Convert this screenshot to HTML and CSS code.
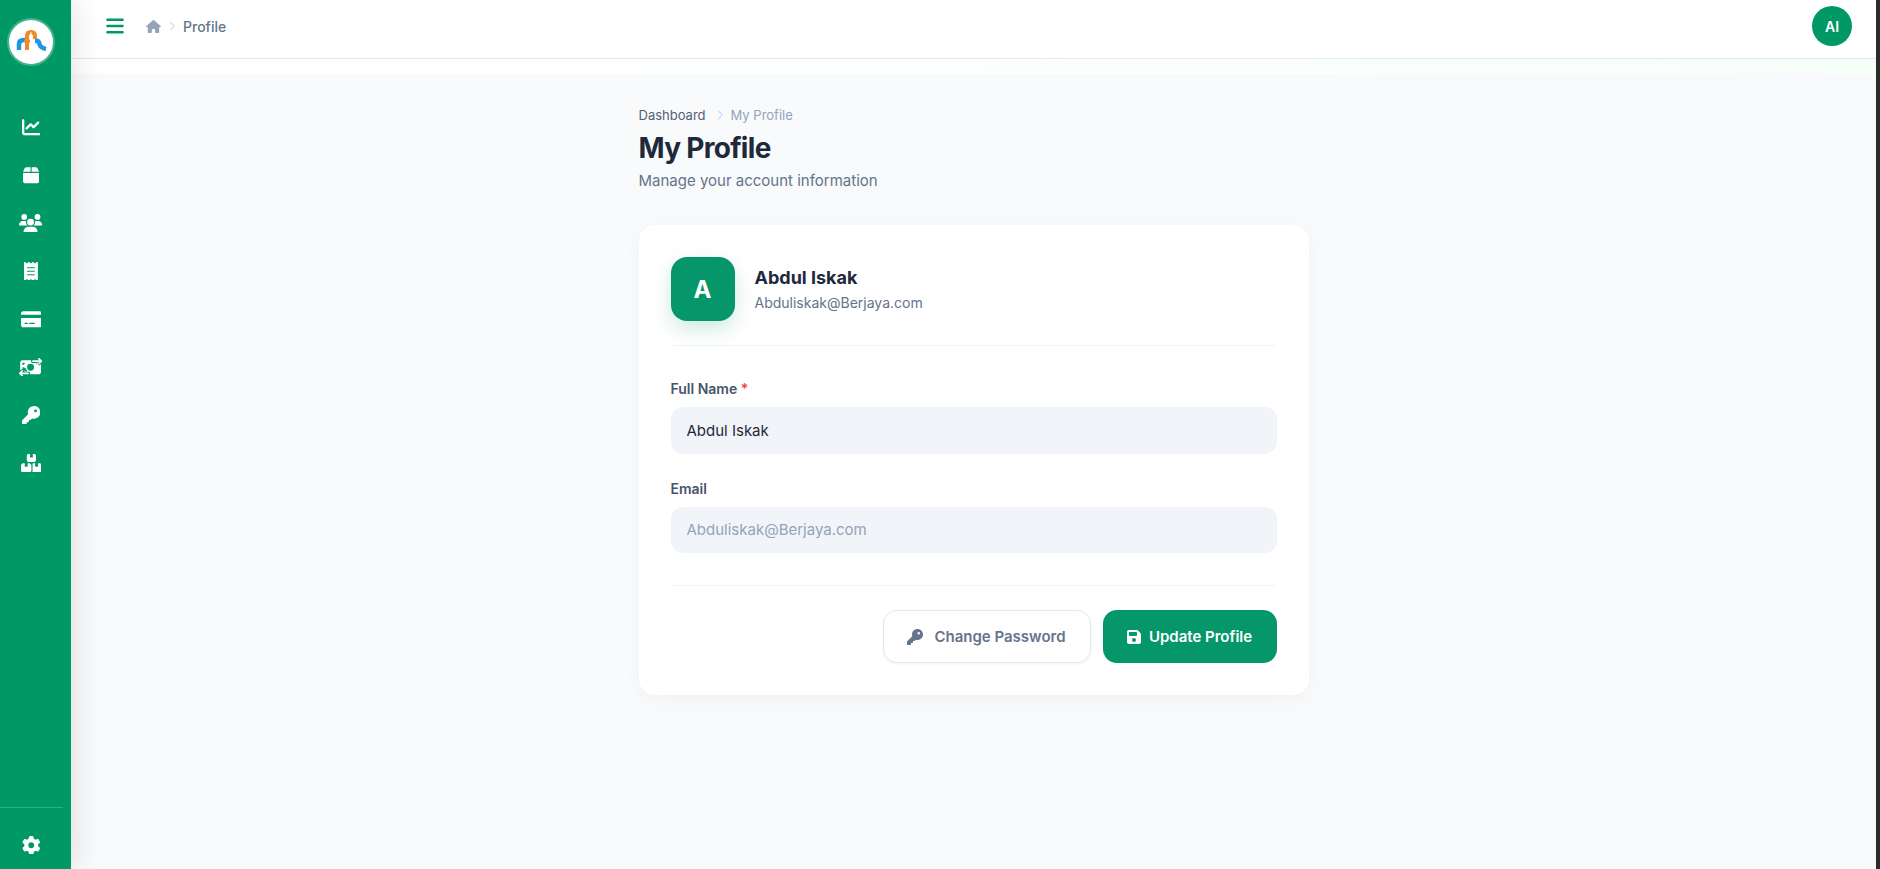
FILE: index.html
```html
<!DOCTYPE html>
<html lang="en">
<head>
<meta charset="utf-8">
<title>My Profile</title>
<link rel="stylesheet" href="styles.css">
</head>
<body>
<div class="app">
  <aside class="sidebar">
    <div class="logo-wrap">
      <div class="logo">
        <svg viewBox="0 0 44 44" width="44" height="44" fill="none">
          <path d="M10 30v-6q0-4 5-4h1" stroke="#1e96e8" stroke-width="4.500"/>
          <path d="M26 20.500q4 0 4.500 3.500t6.500 5" stroke="#1e96e8" stroke-width="4.500"/>
          <path d="M18 30V16q0-4 4-4t4 4v3" stroke="#f08a24" stroke-width="4"/>
          <path d="M15 21h6" stroke="#f08a24" stroke-width="3"/>
          <path d="M22 12v4" stroke="#fff" stroke-width="1"/>
        </svg>
      </div>
    </div>
    <nav class="side-nav">
      <a class="side-item"><svg class="side-icon" viewBox="0 0 512 512"><path d="M64 64c0-17.700-14.300-32-32-32S0 46.300 0 64V400c0 44.200 35.800 80 80 80H480c17.700 0 32-14.300 32-32s-14.300-32-32-32H80c-8.800 0-16-7.200-16-16V64zm406.600 86.600c12.500-12.500 12.500-32.800 0-45.300s-32.800-12.500-45.300 0L320 210.700l-57.400-57.400c-12.500-12.500-32.800-12.500-45.300 0l-112 112c-12.500 12.500-12.500 32.800 0 45.300s32.800 12.500 45.300 0L240 221.300l57.400 57.400c12.500 12.500 32.800 12.500 45.300 0l128-128z"/></svg></a>
      <a class="side-item"><svg class="side-icon" viewBox="0 0 448 512"><path d="M50.700 58.500L0 160H208V32H93.700C75.500 32 58.900 42.300 50.700 58.500zM240 160H448L397.300 58.500C389.100 42.300 372.500 32 354.300 32H240V160zm208 32H0V416c0 35.300 28.700 64 64 64H384c35.300 0 64-28.700 64-64V192z"/></svg></a>
      <a class="side-item"><svg class="side-icon" viewBox="0 0 640 512"><path d="M144 0a80 80 0 1 1 0 160A80 80 0 1 1 144 0zM512 0a80 80 0 1 1 0 160A80 80 0 1 1 512 0zM0 298.700C0 239.800 47.800 192 106.700 192h42.700c15.900 0 31 3.500 44.600 9.700c-1.300 7.200-1.900 14.700-1.900 22.300c0 38.200 16.800 72.500 43.300 96c-.2 0-.4 0-.7 0H21.300C9.600 320 0 310.400 0 298.700zM405.300 320c-.2 0-.4 0-.7 0c26.600-23.500 43.300-57.800 43.300-96c0-7.600-.7-15-1.900-22.300c13.600-6.300 28.700-9.700 44.600-9.700h42.700C592.200 192 640 239.800 640 298.700c0 11.800-9.600 21.300-21.300 21.300H405.300zM224 224a96 96 0 1 1 192 0 96 96 0 1 1 -192 0zM128 485.300C128 411.700 187.700 352 261.300 352H378.700C452.300 352 512 411.700 512 485.300c0 14.700-11.900 26.700-26.700 26.700H154.700c-14.700 0-26.700-11.900-26.700-26.700z"/></svg></a>
      <a class="side-item"><svg class="side-icon" viewBox="0 0 384 512"><path d="M14 2.200C22.500-1.700 32.500-.3 39.600 5.800L80 40.400 120.400 5.800c9-7.700 22.300-7.700 31.200 0L192 40.400 232.400 5.800c9-7.700 22.200-7.700 31.200 0L304 40.400 344.400 5.800c7.100-6.100 17.100-7.500 25.600-3.600s14 12.400 14 21.800V488c0 9.400-5.500 17.900-14 21.800s-18.500 2.500-25.600-3.600L304 471.600l-40.400 34.600c-9 7.700-22.300 7.700-31.200 0L192 471.600l-40.400 34.600c-9 7.700-22.200 7.700-31.200 0L80 471.600 39.600 506.200c-7.100 6.100-17.100 7.500-25.600 3.600S0 497.400 0 488V24C0 14.600 5.500 6.100 14 2.200zM96 144c-8.800 0-16 7.200-16 16s7.200 16 16 16H288c8.800 0 16-7.200 16-16s-7.200-16-16-16H96zM80 352c0 8.800 7.200 16 16 16H288c8.800 0 16-7.200 16-16s-7.200-16-16-16H96c-8.800 0-16 7.200-16 16zM96 240c-8.800 0-16 7.200-16 16s7.200 16 16 16H288c8.800 0 16-7.200 16-16s-7.200-16-16-16H96z"/></svg></a>
      <a class="side-item"><svg class="side-icon" viewBox="0 0 576 512"><path d="M64 32C28.700 32 0 60.700 0 96v32H576V96c0-35.300-28.700-64-64-64H64zM576 224H0V416c0 35.300 28.700 64 64 64H512c35.300 0 64-28.700 64-64V224zM112 352h64c8.800 0 16 7.200 16 16s-7.200 16-16 16H112c-8.800 0-16-7.200-16-16s7.200-16 16-16zm112 16c0-8.800 7.200-16 16-16H368c8.800 0 16 7.200 16 16s-7.200 16-16 16H240c-8.800 0-16-7.200-16-16z"/></svg></a>
      <a class="side-item"><svg class="side-icon" viewBox="0 0 640 512"><path fill-rule="evenodd" d="M535 41c-9.400-9.400-9.400-24.600 0-33.900s24.600-9.400 33.900 0l64 64c4.500 4.500 7 10.600 7 17s-2.500 12.500-7 17l-64 64c-9.400 9.400-24.600 9.400-33.900 0s-9.400-24.600 0-33.900l23-23L384 112c-13.300 0-24-10.700-24-24s10.700-24 24-24l174.100 0L535 41zM105 377l-23 23L256 400c13.300 0 24 10.700 24 24s-10.700 24-24 24L81.900 448l23 23c9.400 9.400 9.400 24.600 0 33.900s-24.600 9.400-33.900 0L7 441c-4.500-4.500-7-10.600-7-17s2.500-12.500 7-17l64-64c9.400-9.400 24.600-9.400 33.900 0s9.400 24.600 0 33.900zM96 64H337.900c-3.700 7.200-5.900 15.300-5.900 24c0 28.700 23.300 52 52 52l117.400 0c-4 17 .6 35.500 13.800 48.800c20.300 20.300 53.200 20.300 73.500 0L608 169.500V384c0 35.300-28.700 64-64 64H302.100c3.700-7.200 5.900-15.300 5.900-24c0-28.700-23.300-52-52-52l-117.400 0c4-17-.6-35.500-13.800-48.800c-20.300-20.300-53.200-20.300-73.500 0L32 342.500V128c0-35.300 28.700-64 64-64zm64 64H96v64c35.300 0 64-28.700 64-64zM96 320c35.300 0 64 28.700 64 64h64c0-70.700-57.300-128-128-128v64zM544 192V128H480c0 35.300 28.700 64 64 64zM320 352a96 96 0 1 0 0-192 96 96 0 1 0 0 192z"/></svg></a>
      <a class="side-item"><svg class="side-icon" viewBox="0 0 512 512"><path d="M336 352c97.200 0 176-78.800 176-176S433.200 0 336 0S160 78.800 160 176c0 18.700 2.900 36.800 8.300 53.700L7 391c-4.500 4.500-7 10.600-7 17v80c0 13.300 10.700 24 24 24h80c13.300 0 24-10.700 24-24V448h40c13.300 0 24-10.700 24-24V384h40c6.400 0 12.500-2.500 17-7l33.300-33.300c16.900 5.400 35 8.300 53.700 8.300zM376 96a40 40 0 1 1 0 80 40 40 0 1 1 0-80z"/></svg></a>
      <a class="side-item"><svg class="side-icon" viewBox="0 0 576 512"><path d="M248 0H208c-26.500 0-48 21.500-48 48V160c0 35.300 28.700 64 64 64H352c35.300 0 64-28.700 64-64V48c0-26.500-21.500-48-48-48H328V80c0 8.800-7.200 16-16 16H264c-8.800 0-16-7.200-16-16V0zM64 256c-35.300 0-64 28.700-64 64V448c0 35.300 28.700 64 64 64H224c35.300 0 64-28.700 64-64V320c0-35.300-28.700-64-64-64H184v80c0 8.800-7.200 16-16 16H120c-8.800 0-16-7.200-16-16V256H64zM352 512H512c35.300 0 64-28.700 64-64V320c0-35.300-28.700-64-64-64H472v80c0 8.800-7.200 16-16 16H408c-8.800 0-16-7.200-16-16V256H352c-15 0-28.800 5.100-39.700 13.800c4.900 10.400 7.700 22 7.700 34.200V464c0 12.200-2.800 23.800-7.700 34.200C323.200 506.900 337 512 352 512z"/></svg></a>
    </nav>
    <div class="side-foot">
      <a class="side-item"><svg class="side-icon" viewBox="0 0 512 512"><path d="M495.900 166.600c3.200 8.700 .5 18.400-6.400 24.600l-43.300 39.400c1.100 8.300 1.700 16.800 1.700 25.400s-.6 17.100-1.700 25.400l43.300 39.400c6.900 6.200 9.600 15.900 6.400 24.600c-4.400 11.900-9.700 23.300-15.800 34.300l-4.700 8.100c-6.600 11-14 21.400-22.100 31.200c-5.900 7.200-15.700 9.600-24.500 6.800l-55.700-17.700c-13.400 10.300-28.200 18.900-44 25.400l-12.500 57.100c-2 9.100-9 16.300-18.200 17.800c-13.800 2.300-28 3.500-42.500 3.500s-28.700-1.200-42.500-3.500c-9.200-1.500-16.200-8.700-18.200-17.800l-12.500-57.100c-15.800-6.500-30.600-15.100-44-25.400L83.100 425.900c-8.800 2.800-18.600 .3-24.500-6.800c-8.100-9.800-15.500-20.200-22.100-31.200l-4.700-8.100c-6.100-11-11.400-22.400-15.800-34.300c-3.200-8.700-.5-18.400 6.400-24.600l43.300-39.400C64.600 273.100 64 264.600 64 256s.6-17.100 1.700-25.400L22.400 191.200c-6.900-6.200-9.600-15.900-6.400-24.600c4.400-11.900 9.700-23.300 15.800-34.300l4.700-8.100c6.600-11 14-21.400 22.100-31.200c5.900-7.200 15.700-9.600 24.500-6.800l55.700 17.700c13.400-10.300 28.200-18.900 44-25.400l12.500-57.100c2-9.100 9-16.300 18.200-17.800C227.300 1.200 241.500 0 256 0s28.700 1.200 42.500 3.500c9.200 1.500 16.200 8.700 18.200 17.800l12.500 57.100c15.800 6.500 30.600 15.100 44 25.400l55.700-17.700c8.800-2.800 18.600-.3 24.500 6.800c8.100 9.800 15.500 20.200 22.100 31.200l4.700 8.100c6.100 11 11.400 22.400 15.800 34.300zM256 336a80 80 0 1 0 0-160 80 80 0 1 0 0 160z"/></svg></a>
    </div>
  </aside>
  <div class="main">
    <header class="topbar">
      <svg class="menu-icon" viewBox="0 0 448 512"><path d="M0 96C0 78.300 14.300 64 32 64H416c17.700 0 32 14.300 32 32s-14.300 32-32 32H32C14.300 128 0 113.700 0 96zM0 256c0-17.700 14.300-32 32-32H416c17.700 0 32 14.300 32 32s-14.300 32-32 32H32c-17.700 0-32-14.300-32-32zM448 416c0 17.700-14.300 32-32 32H32c-17.700 0-32-14.300-32-32s14.300-32 32-32H416c17.700 0 32 14.300 32 32z"/></svg>
      <div class="top-crumbs">
        <svg class="home-icon" viewBox="0 0 576 512"><path d="M575.800 255.500c0 18-15 32.100-32 32.100h-32l.7 160.200c0 2.700-.2 5.400-.5 8.100V472c0 22.100-17.900 40-40 40H456c-1.100 0-2.200 0-3.300-.1c-1.400 .1-2.800 .1-4.200 .1H416 392c-22.100 0-40-17.900-40-40V448 384c0-17.700-14.300-32-32-32H256c-17.700 0-32 14.300-32 32v64 24c0 22.100-17.900 40-40 40H160 128.100c-1.500 0-3-.1-4.500-.2c-1.200 .1-2.400 .2-3.600 .2H104c-22.100 0-40-17.900-40-40V360c0-.9 0-1.900 .1-2.800V287.600H32c-18 0-32-14-32-32.100c0-9 3-17 10-24L266.400 8c7-7 15-8 22-8s15 2 21 7L564.800 231.500c8 7 12 15 11 24z"/></svg>
        <svg class="chev" viewBox="0 0 8 12"><path d="M1.500 1l4.500 5-4.500 5"/></svg>
        <span class="top-crumb-text">Profile</span>
      </div>
      <div class="top-avatar">AI</div>
    </header>
    <div class="top-strip"></div>
    <main class="content">
      <div class="page">
        <div class="crumbs">
          <span class="crumb-link">Dashboard</span>
          <svg class="chev" viewBox="0 0 8 12"><path d="M1.500 1l4.500 5-4.500 5"/></svg>
          <span class="crumb-current">My Profile</span>
        </div>
        <h1 class="title">My Profile</h1>
        <p class="subtitle">Manage your account information</p>
        <section class="card">
          <div class="profile-row">
            <div class="big-avatar">A</div>
            <div class="profile-info">
              <div class="profile-name">Abdul Iskak</div>
              <div class="profile-email">Abduliskak@Berjaya.com</div>
            </div>
          </div>
          <div class="field">
            <label class="field-label">Full Name <span class="req">*</span></label>
            <input class="field-input" type="text" value="Abdul Iskak">
          </div>
          <div class="field field-last">
            <label class="field-label">Email</label>
            <input class="field-input is-disabled" type="text" value="Abduliskak@Berjaya.com" disabled>
          </div>
          <div class="actions">
            <button class="btn btn-ghost"><svg class="btn-key" viewBox="0 0 512 512"><path d="M336 352c97.200 0 176-78.800 176-176S433.200 0 336 0S160 78.800 160 176c0 18.700 2.900 36.800 8.300 53.700L7 391c-4.500 4.500-7 10.600-7 17v80c0 13.300 10.700 24 24 24h80c13.300 0 24-10.700 24-24V448h40c13.300 0 24-10.700 24-24V384h40c6.400 0 12.500-2.500 17-7l33.300-33.300c16.900 5.400 35 8.300 53.700 8.300zM376 96a40 40 0 1 1 0 80 40 40 0 1 1 0-80z"/></svg>Change Password</button>
            <button class="btn btn-primary"><svg class="btn-save" viewBox="0 0 448 512"><path d="M64 32C28.700 32 0 60.700 0 96V416c0 35.300 28.700 64 64 64H384c35.300 0 64-28.700 64-64V173.300c0-17-6.700-33.300-18.700-45.300L352 50.700C340 38.700 323.700 32 306.700 32H64zm0 96c0-17.700 14.300-32 32-32H288c17.700 0 32 14.300 32 32v64c0 17.700-14.300 32-32 32H96c-17.700 0-32-14.300-32-32V128zM224 288a64 64 0 1 1 0 128 64 64 0 1 1 0-128z"/></svg>Update Profile</button>
          </div>
        </section>
      </div>
    </main>
  </div>
  <div class="edge"></div>
</div>
</body>
</html>
```

FILE: styles.css
```css
* { box-sizing: border-box; }
html, body { margin: 0; height: 100%; overflow: hidden; }
body { font-family: Inter, "Liberation Sans", sans-serif; color: #1e293b; background: #f8fafc; }
.app { display: flex; height: 869px; }

.sidebar { width: 71px; flex: none; background: #009966; display: flex; flex-direction: column; position: relative; z-index: 2; box-shadow: 4px 0 30px rgba(0, 0, 0, .11); }
.logo-wrap { height: 103px; padding: 20px 0 0 9px; }
.logo { width: 44px; height: 44px; border-radius: 50%; background: #fff; box-shadow: 0 0 0 2px rgba(255, 255, 255, .25); }
.logo svg { display: block; }
.side-nav { display: flex; flex-direction: column; flex: 1; }
.side-item { width: 62px; height: 48px; display: flex; align-items: center; justify-content: center; }
.side-icon { height: 18.500px; fill: #fff; }
.side-foot { width: 63px; border-top: 1px solid rgba(255, 255, 255, .2); padding: 13px 0 0; height: 62px; }

.main { flex: 1; min-width: 0; display: flex; flex-direction: column; }
.topbar { height: 59px; flex: none; background: #fff; border-bottom: 1px solid #e2e8f0; display: flex; align-items: center; padding: 0 24px 0 35px; }
.menu-icon { width: 18px; height: 20px; fill: #009966; margin-top: -7px; }
.top-crumbs { display: flex; align-items: center; margin-left: 22px; margin-top: -6px; }
.home-icon { width: 15px; height: 13px; fill: #94a3b8; }
.chev { width: 7px; height: 10px; fill: none; stroke: #cbd5e1; stroke-width: 1.300; }
.top-crumbs .chev { margin: 0 7px 0 8px; }
.top-crumb-text { font-size: 14px; font-weight: 500; color: #64748b; }
.top-avatar { margin-left: auto; width: 40px; height: 40px; margin-top: -6px; border-radius: 50%; background: #009966; color: #fff; font-size: 14px; font-weight: 600; display: flex; align-items: center; justify-content: center; }
.top-strip { height: 15px; flex: none; background: linear-gradient(90deg, #fff 0%, #fdfefe 50%, #f7fff9 100%); }

.content { flex: 1; padding: 33px 0 0; }
.page { width: 670px; margin: 0 auto; }
.crumbs { display: flex; align-items: center; font-size: 13px; line-height: 16px; height: 16px; }
.crumb-link { color: #526077; }
.crumbs .chev { margin: 0 7px 0 11px; }
.crumb-current { color: #94a3b8; }
.title { margin: 7px 0 0; font-size: 28px; line-height: 36px; font-weight: 700; letter-spacing: -.7px; color: #1e293b; }
.subtitle { margin: 4px 0 0; font-size: 15px; line-height: 22px; color: #64748b; }

.card { margin-top: 33px; background: #fff; border-radius: 16px; padding: 32px; box-shadow: 0 4px 20px rgba(0, 0, 0, .04); }
.profile-row { display: flex; align-items: center; gap: 20px; padding-bottom: 24px; border-bottom: 1px solid #f1f5f9; margin-bottom: 32px; }
.big-avatar { width: 64px; height: 64px; border-radius: 16px; background: #059669; color: #fff; font-size: 24px; font-weight: 700; display: flex; align-items: center; justify-content: center; box-shadow: 0 8px 20px rgba(5, 150, 105, .2); }
.profile-name { font-size: 18px; line-height: 26px; font-weight: 700; color: #1e293b; }
.profile-email { font-size: 14px; line-height: 20px; margin-top: 2px; color: #64748b; }

.field { margin-bottom: 24px; }
.field-last { margin-bottom: 32px; }
.field-label { display: block; font-size: 14px; line-height: 21px; font-weight: 600; color: #475569; margin-bottom: 8px; }
.req { color: #ef4444; }
.field-input { display: block; width: 100%; height: 46.500px; border: 0; border-radius: 12px; background: #f1f5f9; padding: 0 16px; font: 15px Inter, "Liberation Sans", sans-serif; color: #1e293b; outline: none; }
.is-disabled { color: #94a3b8; }

.actions { border-top: 1px solid #f1f5f9; padding-top: 24px; display: flex; justify-content: flex-end; gap: 12px; }
.btn { height: 53px; border-radius: 14px; font: 600 15px Inter, "Liberation Sans", sans-serif; display: flex; align-items: center; justify-content: center; }
.btn-ghost { width: 208px; background: #fff; border: 1px solid #e2e8f0; color: #64748b; gap: 11px; box-shadow: 0 1px 3px rgba(0, 0, 0, .06); }
.btn-primary { width: 174px; background: #059669; border: 0; color: #fff; gap: 8px; }
.btn-key { width: 16px; height: 16px; fill: #64748b; }
.btn-save { width: 14px; height: 16px; fill: #fff; }

.edge { width: 4px; flex: none; background: #2b2b2b; position: relative; z-index: 3; }
```
